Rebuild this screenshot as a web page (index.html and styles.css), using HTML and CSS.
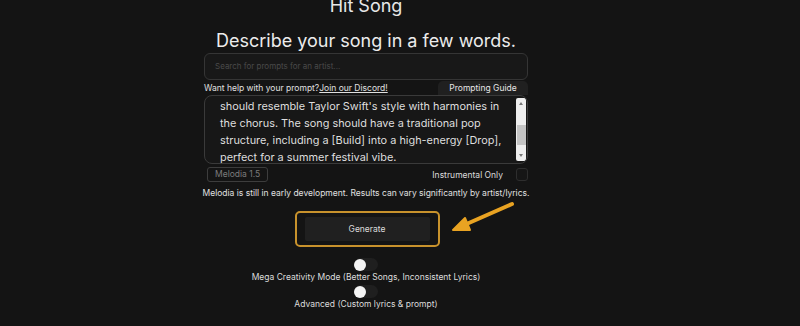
FILE: index.html
```html
<!DOCTYPE html>
<html>
<head>
<meta charset="utf-8">
<link rel="stylesheet" href="styles.css">
</head>
<body>
<div class="page">
  <h1 class="title">Hit Song</h1>
  <h2 class="subtitle">Describe your song in a few words.</h2>
  <div class="search">Search for prompts for an artist...</div>
  <div class="help-row">
    <span class="help">Want help with your prompt?<a class="discord">Join our Discord!</a></span>
    <span class="guide">Prompting Guide</span>
  </div>
  <div class="textarea">
    <div class="text">should resemble Taylor Swift's style with harmonies in the chorus. The song should have a traditional pop structure, including a [Build] into a high-energy [Drop], perfect for a summer festival vibe.</div>
    <div class="scrollbar">
      <span class="arrow-up"></span>
      <span class="thumb"></span>
      <span class="arrow-down"></span>
    </div>
  </div>
  <div class="option-row">
    <span class="model">Melodia 1.5</span>
    <span class="instrumental"><span>Instrumental Only</span><span class="checkbox"></span></span>
  </div>
  <div class="notice">Melodia is still in early development. Results can vary significantly by artist/lyrics.</div>
  <div class="generate-wrap">
    <div class="generate-frame"><div class="generate">Generate</div></div>
    <svg class="pointer" width="70" height="36" viewBox="0 0 70 36">
      <path d="M64 4 L14 26" stroke="#e9a322" stroke-width="4" stroke-linecap="round" fill="none"/>
      <path d="M5 30 L17 18 L22 30 Z" fill="#e9a322" stroke="#e9a322" stroke-width="2" stroke-linejoin="round"/>
    </svg>
  </div>
  <div class="toggle first"><span class="knob"></span></div>
  <div class="toggle-label">Mega Creativity Mode (Better Songs, Inconsistent Lyrics)</div>
  <div class="toggle"><span class="knob"></span></div>
  <div class="toggle-label">Advanced (Custom lyrics &amp; prompt)</div>
</div>
</body>
</html>
```
FILE: styles.css
```css
html, body {
  margin: 0;
  padding: 0;
  background: #141414;
  height: 326px;
  overflow: hidden;
}
.page {
  width: 324px;
  margin-left: 204px;
  display: flex;
  flex-direction: column;
  align-items: center;
  font-family: Inter, "Liberation Sans", sans-serif;
  color: #e6e6e6;
}
.title {
  margin: -6px 0 0;
  font-size: 18px;
  font-weight: 400;
  line-height: 24px;
  color: #e8e8e8;
}
.subtitle {
  margin: 11px 0 0;
  font-size: 18px;
  font-weight: 400;
  line-height: 24px;
  color: #ececec;
}
.search {
  box-sizing: border-box;
  width: 324px;
  height: 27px;
  margin-top: 0;
  border: 1px solid #353535;
  border-radius: 6px;
  background: #181818;
  color: #4a4a4a;
  font-size: 8px;
  line-height: 25px;
  padding-left: 10px;
}
.help-row {
  width: 324px;
  display: flex;
  justify-content: space-between;
  align-items: center;
  margin-top: 1px;
  font-size: 8.5px;
  height: 14px;
}
.help { color: #e0e0e0; }
.discord { text-decoration: underline; color: #e0e0e0; }
.guide {
  background: #202020;
  border-radius: 5px 5px 0 0;
  padding: 0 10px;
  line-height: 14px;
  width: 70px;
  text-align: center;
}
.textarea {
  box-sizing: border-box;
  width: 324px;
  height: 69px;
  border: 1px solid #3a3a3a;
  border-radius: 8px;
  background: #171717;
  display: flex;
  overflow: hidden;
}
.text {
  flex: 1;
  padding: 2px 4px 0 15px;
  font-size: 10.9px;
  line-height: 17px;
  color: #dedede;
}
.scrollbar {
  width: 10px;
  margin: 2px 1px 2px 0;
  background: #eeeeee;
  border-radius: 2px;
  display: flex;
  flex-direction: column;
  align-items: center;
}
.arrow-up, .arrow-down {
  width: 0;
  height: 0;
  border-left: 2.5px solid transparent;
  border-right: 2.5px solid transparent;
  margin: 4px 0;
}
.arrow-up { border-bottom: 3px solid #777; }
.arrow-down { border-top: 3px solid #777; }
.thumb {
  width: 9px;
  height: 20px;
  margin-top: 16px;
  margin-bottom: auto;
  background: #c4c4c4;
}
.option-row {
  width: 324px;
  display: flex;
  justify-content: space-between;
  align-items: center;
  margin-top: 3px;
  height: 15px;
}
.model {
  margin-left: 3px;
  border: 1px solid #3d3d3d;
  border-radius: 3px;
  color: #7c7c7c;
  font-size: 8.5px;
  padding: 0 7px;
  line-height: 13px;
}
.instrumental {
  font-size: 8.5px;
  color: #dcdcdc;
  display: flex;
  align-items: center;
  gap: 13px;
}
.checkbox {
  width: 10px;
  height: 11px;
  border: 1px solid #2e2e2e;
  border-radius: 3px;
  background: #161616;
}
.notice {
  margin-top: 4px;
  font-size: 8.5px;
  color: #e0e0e0;
  white-space: nowrap;
  line-height: 14px;
}
.generate-wrap {
  margin-top: 11px;
  position: relative;
}
.generate-frame {
  box-sizing: border-box;
  width: 145px;
  height: 36px;
  border: 2px solid #c8922c;
  border-radius: 5px;
  padding: 4px 8px;
  margin-left: 2px;
}
.generate {
  height: 100%;
  background: #202020;
  border-radius: 2px;
  display: flex;
  align-items: center;
  justify-content: center;
  font-size: 8.5px;
  color: #dcdcdc;
}
.pointer {
  position: absolute;
  left: 155px;
  top: -11px;
}
.toggle {
  width: 24px;
  height: 13px;
  background: #1f1f1f;
  border-radius: 7px;
  display: flex;
  align-items: center;
  margin-top: 1px;
}
.toggle.first { margin-top: 11px; }
.knob {
  width: 12px;
  height: 12px;
  border-radius: 50%;
  background: #f4f4f4;
}
.toggle-label {
  font-size: 8.5px;
  color: #dcdcdc;
  line-height: 13px;
  white-space: nowrap;
}
```
